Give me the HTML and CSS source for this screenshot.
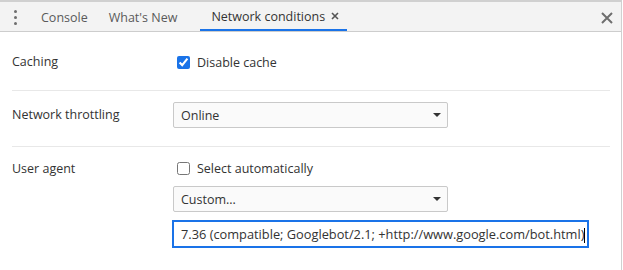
FILE: index.html
```html
<!DOCTYPE html>
<html lang="en">
<head>
    <meta charset="UTF-8">
    <meta name="viewport" content="width=device-width, initial-scale=1.0">
    <title>Network conditions</title>
    <link rel="stylesheet" href="styles.css">
</head>
<body>

<div class="panel">
    <!-- Drawer tabs -->
    <div class="tabbar">
        <div class="menu-dots"><span></span><span></span><span></span></div>
        <div class="tab">Console</div>
        <div class="tab">What's New</div>
        <div class="tab active">Network conditions
            <svg class="tab-close" width="8" height="8" viewBox="0 0 8 8">
                <path d="M1 1 L7 7 M7 1 L1 7" stroke="#555" stroke-width="1.6"/>
            </svg>
        </div>
        <div class="spacer"></div>
        <svg class="drawer-close" width="12" height="12" viewBox="0 0 12 12">
            <path d="M1 1 L11 11 M11 1 L1 11" stroke="#6e6e6e" stroke-width="2"/>
        </svg>
    </div>

    <!-- Settings -->
    <div class="rows">
        <div class="row first">
            <div class="label">Caching</div>
            <div class="controls">
                <label class="check"><input type="checkbox" checked> Disable cache</label>
            </div>
        </div>
        <div class="row">
            <div class="label">Network throttling</div>
            <div class="controls">
                <div class="select-wrap">
                    <select><option>Online</option></select>
                </div>
            </div>
        </div>
        <div class="row last">
            <div class="label">User agent</div>
            <div class="controls">
                <label class="check"><input type="checkbox"> Select automatically</label>
                <div class="select-wrap">
                    <select><option>Custom...</option></select>
                </div>
                <div class="ua-input">7.36 (compatible; Googlebot/2.1; +http://www.google.com/bot.html)<span class="caret"></span></div>
            </div>
        </div>
    </div>
</div>

</body>
</html>
```

FILE: styles.css
```css
body {
    margin: 0;
    font-family: "Segoe UI", "Open Sans", sans-serif;
    font-size: 12.5px;
    color: #333;
    background-color: #fff;
}
.panel {
    width: 622px;
    height: 270px;
    border-top: 2px solid #d0d0d0;
    border-right: 1px solid #d0d0d0;
    box-sizing: border-box;
}
.tabbar {
    display: flex;
    align-items: center;
    height: 30px;
    box-sizing: border-box;
    background-color: #f3f3f3;
    border-bottom: 1px solid #cdcdcd;
}
.menu-dots {
    display: flex;
    flex-direction: column;
    gap: 3px;
    width: 3px;
    margin: 1px 20px 0 14px;
}
.menu-dots span {
    width: 3px;
    height: 3px;
    border-radius: 50%;
    background-color: #6e6e6e;
}
.tab {
    height: 100%;
    display: flex;
    align-items: center;
    padding: 2px 11px 0 4px;
    margin-right: 6px;
    color: #5a5a5a;
    box-sizing: border-box;
}
.tab.active {
    margin-left: 6px;
    padding: 2px 8px 0 11px;
    color: #333;
    border-bottom: 2px solid #1a73e8;
}
.tab-close {
    margin-left: 6px;
    margin-top: -2px;
}
.spacer { flex: 1; }
.drawer-close { margin-right: 8px; margin-top: 2px; }

.rows { padding: 0 11px 0 12px; }
.row {
    display: flex;
    padding: 11px 0 18px;
    border-bottom: 1px solid #e8e8e8;
}
.row.first { padding: 17px 0 15px; }
.row.last {
    padding-top: 8px;
    border-bottom: none;
}
.label {
    width: 161px;
    height: 26px;
    line-height: 26px;
    flex-shrink: 0;
}
.row.last .label { line-height: 28px; }
.controls {
    display: flex;
    flex-direction: column;
    gap: 5px;
}
.check {
    display: flex;
    align-items: center;
    height: 26px;
    gap: 4px;
}
.check input {
    margin: 3px 3px 3px 4px;
    accent-color: #1a73e8;
}
.select-wrap {
    position: relative;
    width: 275px;
}
.select-wrap select {
    appearance: none;
    width: 100%;
    height: 26px;
    padding: 0 7px;
    font: inherit;
    color: #333;
    background-color: #fafafa;
    border: 1px solid #c9c9c9;
    border-radius: 2px;
}
.select-wrap::after {
    content: "";
    position: absolute;
    right: 7px;
    top: 11px;
    border-left: 4px solid transparent;
    border-right: 4px solid transparent;
    border-top: 4px solid #333;
}
.ua-input {
    width: 415px;
    height: 26px;
    line-height: 24px;
    box-sizing: border-box;
    padding: 0 7px;
    margin-top: 4px;
    font-size: 12.8px;
    border: 1px solid #1a73e8;
    box-shadow: 0 0 0 1px #1a73e8;
    white-space: nowrap;
    overflow: hidden;
}
.caret {
    display: inline-block;
    width: 1px;
    height: 15px;
    vertical-align: middle;
    background-color: #000;
}
```
